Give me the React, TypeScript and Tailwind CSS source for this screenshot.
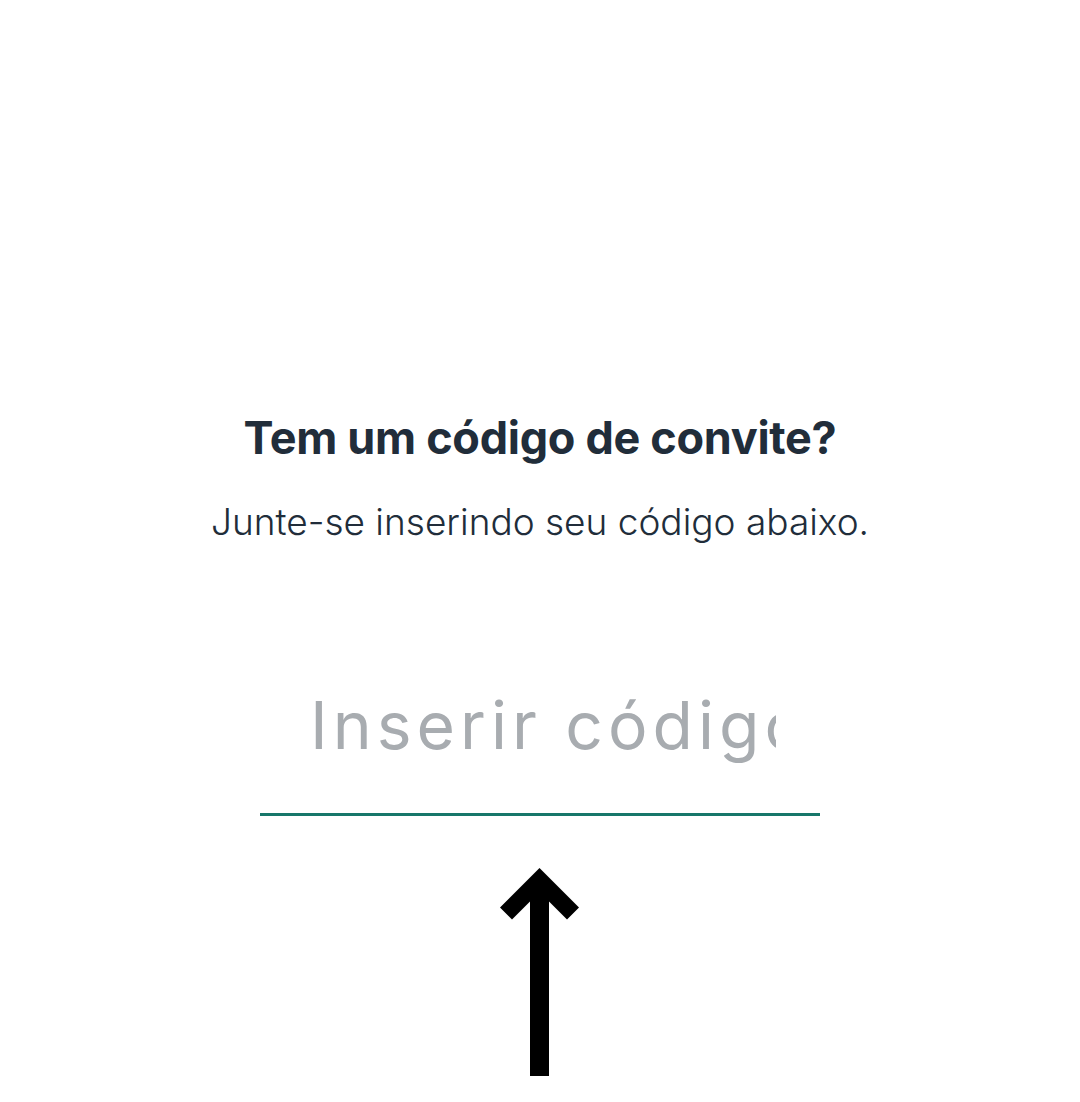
import { useState } from 'react';

export default function App() {
  const [code, setCode] = useState('');

  return (
    <div className="flex min-h-[1102px] w-full flex-col items-center bg-white pt-[406px] font-['Inter','Liberation_Sans',sans-serif]">
      <h1 className="text-[45px] font-bold leading-[64px] tracking-[-0.3px] text-[#212d3a]">
        Tem um código de convite?
      </h1>
      <p className="mt-[27px] text-[37px] font-light leading-[50px] text-[#212d3a]">
        Junte-se inserindo seu código abaixo.
      </p>

      <div className="mt-[125px] w-[560px] border-b-[3px] border-[#17776a]">
        <input
          value={code}
          onChange={(e) => setCode(e.target.value)}
          placeholder="Inserir código"
          className="h-[141px] w-full pb-[36px] pl-[50px] pr-[44px] text-[66px] font-normal tracking-[5px] text-[#212d3a] outline-none placeholder:text-[#a8acb0]"
        />
      </div>

      {/* seta */}
      <svg className="mt-[52px]" width="80" height="208" viewBox="0 0 80 208" fill="#000">
        <polygon points="39.5,0 79,39.5 67,51.5 49,33.5 49,208 30,208 30,33.5 12,51.5 0,39.5" />
      </svg>
    </div>
  );
}
